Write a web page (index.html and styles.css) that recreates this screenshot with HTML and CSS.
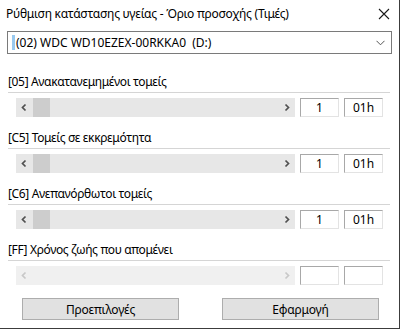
FILE: index.html
```
<!DOCTYPE html>
<html lang="el">
<head>
  <meta charset="UTF-8">
  <meta name="viewport" content="width=device-width, initial-scale=1.0">
  <title>Ρύθμιση κατάστασης υγείας</title>
  <link rel="stylesheet" href="styles.css">
</head>
<body>
  <div class="dialog">
    <header class="title-bar">
      <span class="title">Ρύθμιση κατάστασης υγείας - Όριο προσοχής (Τιμές)</span>
      <svg class="close" width="12" height="12" viewBox="0 0 12 12">
        <path d="M1 1 L11 11 M11 1 L1 11" stroke="#1a1a1a" stroke-width="1.1" fill="none"/>
      </svg>
    </header>

    <div class="combo">
      <span class="caret"></span>
      <span class="combo-text">(02) WDC WD10EZEX-00RKKA0&nbsp; (D:)</span>
      <svg class="combo-arrow" width="9" height="6" viewBox="0 0 9 6">
        <path d="M0.5 0.8 L4.5 4.8 L8.5 0.8" stroke="#555" stroke-width="1" fill="none"/>
      </svg>
    </div>

    <section class="field">
      <div class="label">[05] Ανακατανεμημένοι τομείς</div>
      <div class="rule"></div>
      <div class="row">
        <div class="scroll">
          <svg class="arrow" width="17" height="19" viewBox="0 0 17 19"><path d="M9.5 6.5 L6.5 9.5 L9.5 12.5" stroke="#505050" stroke-width="1.7" fill="none"/></svg>
          <div class="thumb"></div>
          <div class="track"></div>
          <svg class="arrow" width="17" height="19" viewBox="0 0 17 19"><path d="M7.5 6.5 L10.5 9.5 L7.5 12.5" stroke="#505050" stroke-width="1.7" fill="none"/></svg>
        </div>
        <div class="edit">1</div>
        <div class="edit">01h</div>
      </div>
    </section>

    <section class="field">
      <div class="label">[C5] Τομείς σε εκκρεμότητα</div>
      <div class="rule"></div>
      <div class="row">
        <div class="scroll">
          <svg class="arrow" width="17" height="19" viewBox="0 0 17 19"><path d="M9.5 6.5 L6.5 9.5 L9.5 12.5" stroke="#505050" stroke-width="1.7" fill="none"/></svg>
          <div class="thumb"></div>
          <div class="track"></div>
          <svg class="arrow" width="17" height="19" viewBox="0 0 17 19"><path d="M7.5 6.5 L10.5 9.5 L7.5 12.5" stroke="#505050" stroke-width="1.7" fill="none"/></svg>
        </div>
        <div class="edit">1</div>
        <div class="edit">01h</div>
      </div>
    </section>

    <section class="field">
      <div class="label">[C6] Ανεπανόρθωτοι τομείς</div>
      <div class="rule"></div>
      <div class="row">
        <div class="scroll">
          <svg class="arrow" width="17" height="19" viewBox="0 0 17 19"><path d="M9.5 6.5 L6.5 9.5 L9.5 12.5" stroke="#505050" stroke-width="1.7" fill="none"/></svg>
          <div class="thumb"></div>
          <div class="track"></div>
          <svg class="arrow" width="17" height="19" viewBox="0 0 17 19"><path d="M7.5 6.5 L10.5 9.5 L7.5 12.5" stroke="#505050" stroke-width="1.7" fill="none"/></svg>
        </div>
        <div class="edit">1</div>
        <div class="edit">01h</div>
      </div>
    </section>

    <section class="field">
      <div class="label">[FF] Χρόνος ζωής που απομένει</div>
      <div class="rule"></div>
      <div class="row">
        <div class="scroll disabled">
          <svg class="arrow" width="17" height="19" viewBox="0 0 17 19"><path d="M9.5 6.5 L6.5 9.5 L9.5 12.5" stroke="#c8c8c8" stroke-width="1.7" fill="none"/></svg>
          <div class="track"></div>
          <svg class="arrow" width="17" height="19" viewBox="0 0 17 19"><path d="M7.5 6.5 L10.5 9.5 L7.5 12.5" stroke="#c8c8c8" stroke-width="1.7" fill="none"/></svg>
        </div>
        <div class="edit"></div>
        <div class="edit"></div>
      </div>
    </section>

    <footer class="buttons">
      <button class="btn">Προεπιλογές</button>
      <button class="btn">Εφαρμογή</button>
    </footer>
  </div>
</body>
</html>
```

FILE: styles.css
```
body {
  margin: 0;
  background: #fff;
  font-family: "Noto Sans", "Open Sans", sans-serif;
  font-size: 12px;
  color: #000;
}

.dialog {
  width: 399px;
  height: 328px;
  border-right: 1px solid #3c3c3c;
  border-bottom: 1px solid #3c3c3c;
  background: #fff;
}

.title-bar {
  display: flex;
  align-items: center;
  justify-content: space-between;
  height: 27px;
  padding: 0 9px 0 6px;
}

.title {
  font-size: 12px;
  letter-spacing: -0.25px;
}

.close {
  display: block;
}

.combo {
  display: flex;
  align-items: center;
  margin: 4px 7px 0 7px;
  height: 21px;
  border: 1px solid #7a7a7a;
  padding: 0 6px 0 4px;
}

.caret {
  width: 3px;
  height: 15px;
  background: #99c9ef;
}

.combo-text {
  flex: 1;
  padding-left: 1px;
}

.field {
  margin-top: 20px;
  padding-left: 8px;
  padding-right: 9px;
}

.field + .field {
  margin-top: 13px;
}

.label {
  line-height: 16px;
  height: 16px;
  letter-spacing: -0.35px;
}

.rule {
  height: 1px;
  background: #d5d5d5;
  margin-top: 2px;
}

.row {
  display: flex;
  align-items: stretch;
  margin-top: 5px;
  padding-left: 8px;
  height: 19px;
}

.scroll {
  display: flex;
  width: 279px;
  background: #e7e7e7;
}

.scroll.disabled {
  background: #f0f0f0;
}

.arrow {
  display: block;
  flex: none;
}

.thumb {
  width: 17px;
  background: #cdcdcd;
}

.track {
  flex: 1;
}

.edit {
  width: 37px;
  margin-left: 5px;
  border: 1px solid;
  border-color: #a8a8a8 #e3e3e3 #e3e3e3 #a8a8a8;
  text-align: center;
  line-height: 17px;
  background: #fff;
}

.buttons {
  display: flex;
  gap: 43px;
  margin-top: 13px;
  padding-left: 22px;
}

.btn {
  width: 157px;
  height: 22px;
  background: #e1e1e1;
  border: 1px solid #adadad;
  font-family: inherit;
  font-size: 12px;
  letter-spacing: -0.2px;
  color: #000;
  padding: 0;
}
```
